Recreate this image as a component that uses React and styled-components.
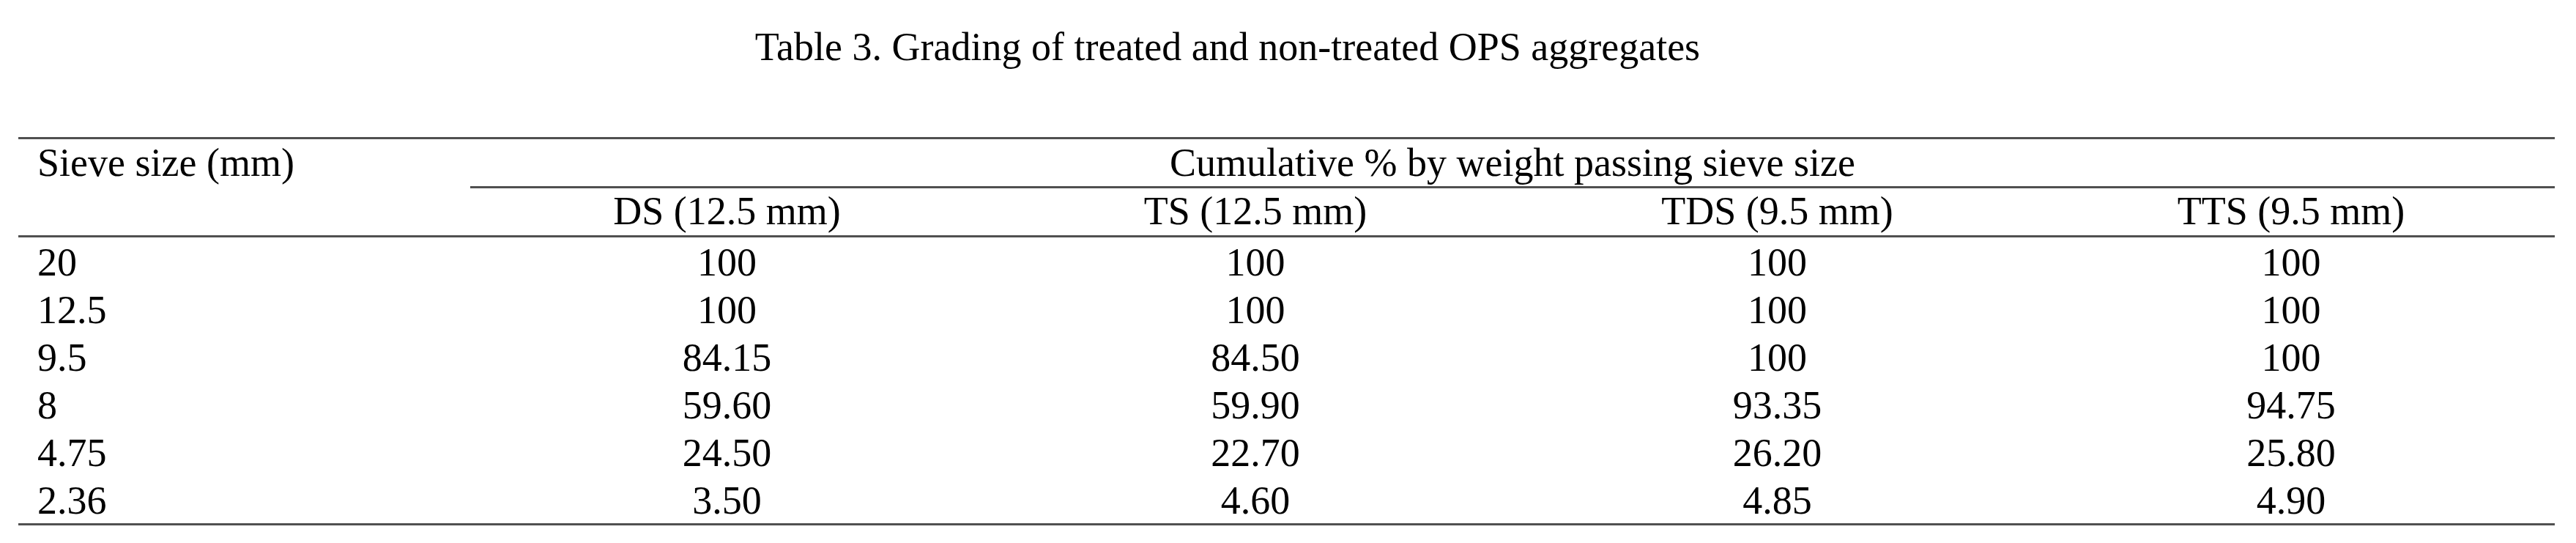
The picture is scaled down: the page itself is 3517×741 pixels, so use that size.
import React from 'react'
import styled, { createGlobalStyle } from 'styled-components'

const GlobalStyle = createGlobalStyle`
  html, body {
    margin: 0;
    padding: 0;
    background: #ffffff;
  }
  body {
    font-family: "Liberation Serif", "Times New Roman", serif;
    color: #000000;
  }
`

const RULE = '3px solid #505050'

const columns = [617, 701, 742, 683, 720]

const subHeads = ['DS (12.5 mm)', 'TS (12.5 mm)', 'TDS (9.5 mm)', 'TTS (9.5 mm)']

const rows = [
  ['20', '100', '100', '100', '100'],
  ['12.5', '100', '100', '100', '100'],
  ['9.5', '84.15', '84.50', '100', '100'],
  ['8', '59.60', '59.90', '93.35', '94.75'],
  ['4.75', '24.50', '22.70', '26.20', '25.80'],
  ['2.36', '3.50', '4.60', '4.85', '4.90'],
]

const Page = styled.div`
  width: 3517px;
  padding-top: 34px;
  font-size: 54px;
`

const Caption = styled.div`
  padding-right: 165px;
  text-align: center;
  line-height: 60px;
  height: 60px;
  margin-bottom: 93px;
`

const Table = styled.table`
  margin-left: 25px;
  width: 3463px;
  table-layout: fixed;
  border-collapse: collapse;
  border-spacing: 0;
  font-size: 54px;
`

const Col = styled.col`
  width: ${p => p.$w}px;
`

const HeadCell = styled.th`
  font-weight: normal;
  padding: 0;
  line-height: 64px;
  vertical-align: top;
  text-align: ${p => (p.$left ? 'left' : 'center')};
  padding-left: ${p => (p.$left ? '26px' : '0')};
  border-top: ${p => (p.$top ? RULE : 'none')};
  border-bottom: ${p => (p.$rule ? RULE : 'none')};
  white-space: nowrap;
`

const SubCell = styled.th`
  font-weight: normal;
  padding: 0 0 2px;
  line-height: 62px;
  text-align: center;
  border-bottom: ${RULE};
  white-space: nowrap;
`

const Row = styled.tr`
  &:last-child td {
    border-bottom: ${RULE};
  }
`

const Cell = styled.td`
  padding: 4px 0 0;
  line-height: 61px;
  height: 61px;
  text-align: ${p => (p.$left ? 'left' : 'center')};
  padding-left: ${p => (p.$left ? '26px' : '0')};
  white-space: nowrap;
`

export default function App() {
  return (
    <Page>
      <GlobalStyle />
      <Caption>Table 3. Grading of treated and non-treated OPS aggregates</Caption>
      <Table>
        <colgroup>
          {columns.map((w, i) => (
            <Col key={i} $w={w} />
          ))}
        </colgroup>
        <thead>
          <tr>
            <HeadCell $left $top $rule rowSpan={2}>
              Sieve size (mm)
            </HeadCell>
            <HeadCell $top $rule colSpan={4}>
              Cumulative % by weight passing sieve size
            </HeadCell>
          </tr>
          <tr>
            {subHeads.map(h => (
              <SubCell key={h}>{h}</SubCell>
            ))}
          </tr>
        </thead>
        <tbody>
          {rows.map(r => (
            <Row key={r[0]}>
              {r.map((v, i) => (
                <Cell key={i} $left={i === 0}>
                  {v}
                </Cell>
              ))}
            </Row>
          ))}
        </tbody>
      </Table>
    </Page>
  )
}
